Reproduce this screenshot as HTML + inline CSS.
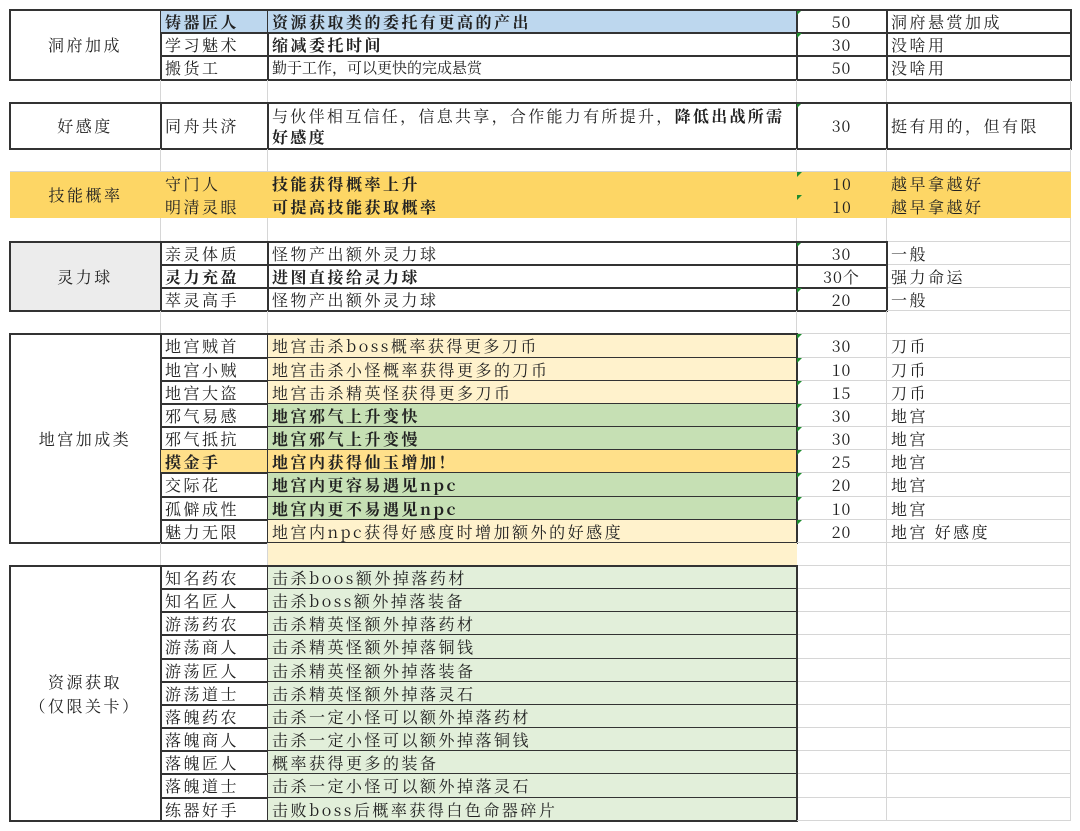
<!DOCTYPE html>
<html><head><meta charset="utf-8"><style>
body{margin:0;width:1080px;height:831px;background:#fff;position:relative;overflow:hidden;font-family:"Noto Serif CJK SC","Liberation Serif",serif;font-size:16px;color:#222;letter-spacing:2.5px}
.c{position:absolute;box-sizing:border-box;border-right:1px solid #d6d6d6;border-bottom:1px solid #d6d6d6;padding-left:4px;white-space:nowrap;overflow:hidden}
.A{left:10px;width:151px;text-align:center;padding-left:0}
.B{left:161px;width:107px}
.C{left:268px;width:529px}
.D{left:797px;width:90px;text-align:center;padding-left:0;letter-spacing:1px}
.E{left:887px;width:184px}
.k{outline:1px solid #333;outline-offset:-0.5px}
.b{font-weight:700}
.t::before{content:"";position:absolute;left:0;top:0;border-top:5px solid #1e8c2e;border-right:5px solid transparent}
.box{position:absolute;box-sizing:border-box;border:1.5px solid #333;pointer-events:none}
</style></head><body>
<!-- section 1 -->
<div class="c A k" style="top:10px;height:70px;line-height:70px">洞府加成</div>
<div class="c B k b" style="top:10px;height:23px;line-height:23px;background:#bdd7ee">铸器匠人</div>
<div class="c C k b" style="top:10px;height:23px;line-height:23px;background:#bdd7ee">资源获取类的委托有更高的产出</div>
<div class="c D k t" style="top:10px;height:23px;line-height:23px">50</div>
<div class="c E k" style="top:10px;height:23px;line-height:23px">洞府悬赏加成</div>
<div class="c B k" style="top:33px;height:23px;line-height:23px">学习魅术</div>
<div class="c C k b" style="top:33px;height:23px;line-height:23px">缩减委托时间</div>
<div class="c D k t" style="top:33px;height:23px;line-height:23px">30</div>
<div class="c E k" style="top:33px;height:23px;line-height:23px">没啥用</div>
<div class="c B k" style="top:56px;height:24px;line-height:24px">搬货工</div>
<div class="c C k" style="top:56px;height:24px;line-height:24px;letter-spacing:0;font-size:15px">勤于工作，可以更快的完成悬赏</div>
<div class="c D k" style="top:56px;height:24px;line-height:24px">50</div>
<div class="c E k" style="top:56px;height:24px;line-height:24px">没啥用</div>
<div class="box" style="left:10px;top:10px;width:1061px;height:70px"></div>
<!-- blank -->
<div class="c A" style="top:80px;height:23px"></div><div class="c B" style="top:80px;height:23px"></div><div class="c C" style="top:80px;height:23px"></div><div class="c D" style="top:80px;height:23px"></div><div class="c E" style="top:80px;height:23px"></div>
<!-- 好感度 -->
<div class="c A k" style="top:103px;height:46px;line-height:46px">好感度</div>
<div class="c B k" style="top:103px;height:46px;line-height:46px">同舟共济</div>
<div class="c C k" style="top:103px;height:46px;line-height:21px;padding-top:2px;white-space:normal;letter-spacing:2.3px">与伙伴相互信任，信息共享，合作能力有所提升，<b>降低出战所需好感度</b></div>
<div class="c D k t" style="top:103px;height:46px;line-height:46px">30</div>
<div class="c E k" style="top:103px;height:46px;line-height:46px">挺有用的，但有限</div>
<div class="box" style="left:10px;top:103px;width:1061px;height:46px"></div>
<div class="c A" style="top:149px;height:23px"></div><div class="c B" style="top:149px;height:23px"></div><div class="c C" style="top:149px;height:23px"></div><div class="c D" style="top:149px;height:23px"></div><div class="c E" style="top:149px;height:23px"></div>
<!-- 技能概率 -->
<div style="position:absolute;left:10px;top:172px;width:1061px;height:46px;background:#fdd665"></div>
<div class="c A" style="top:172px;height:46px;line-height:46px;border:0">技能概率</div>
<div class="c B" style="top:172px;height:23px;line-height:23px;border:0">守门人</div>
<div class="c C b" style="top:172px;height:23px;line-height:23px;border:0">技能获得概率上升</div>
<div class="c D t" style="top:172px;height:23px;line-height:23px;border:0">10</div>
<div class="c E" style="top:172px;height:23px;line-height:23px;border:0">越早拿越好</div>
<div class="c B" style="top:195px;height:23px;line-height:23px;border:0">明清灵眼</div>
<div class="c C b" style="top:195px;height:23px;line-height:23px;border:0">可提高技能获取概率</div>
<div class="c D t" style="top:195px;height:23px;line-height:23px;border:0">10</div>
<div class="c E" style="top:195px;height:23px;line-height:23px;border:0">越早拿越好</div>
<div class="c A" style="top:218px;height:24px"></div><div class="c B" style="top:218px;height:24px"></div><div class="c C" style="top:218px;height:24px"></div><div class="c D" style="top:218px;height:24px"></div><div class="c E" style="top:218px;height:24px"></div>
<!-- 灵力球 -->
<div class="c A k" style="top:242px;height:69px;line-height:69px;background:#ececec">灵力球</div>
<div class="c B k" style="top:242px;height:23px;line-height:23px">亲灵体质</div>
<div class="c C k" style="top:242px;height:23px;line-height:23px">怪物产出额外灵力球</div>
<div class="c D k t" style="top:242px;height:23px;line-height:23px">30</div>
<div class="c E" style="top:242px;height:23px;line-height:23px">一般</div>
<div class="c B k b" style="top:265px;height:23px;line-height:23px">灵力充盈</div>
<div class="c C k b" style="top:265px;height:23px;line-height:23px">进图直接给灵力球</div>
<div class="c D k" style="top:265px;height:23px;line-height:23px">30个</div>
<div class="c E" style="top:265px;height:23px;line-height:23px">强力命运</div>
<div class="c B k" style="top:288px;height:23px;line-height:23px">萃灵高手</div>
<div class="c C k" style="top:288px;height:23px;line-height:23px">怪物产出额外灵力球</div>
<div class="c D k t" style="top:288px;height:23px;line-height:23px">20</div>
<div class="c E" style="top:288px;height:23px;line-height:23px">一般</div>
<div class="box" style="left:10px;top:242px;width:877px;height:69px"></div>
<div class="c A" style="top:311px;height:23px"></div><div class="c B" style="top:311px;height:23px"></div><div class="c C" style="top:311px;height:23px"></div><div class="c D" style="top:311px;height:23px"></div><div class="c E" style="top:311px;height:23px"></div>
<!-- 地宫 -->
<div class="c A k" style="top:334px;height:209px;line-height:209px">地宫加成类</div>
<div class="c B k" style="top:334px;height:24px;line-height:24px">地宫贼首</div>
<div class="c C k" style="top:334px;height:24px;line-height:24px;background:#fff2cc">地宫击杀boss概率获得更多刀币</div>
<div class="c D t" style="top:334px;height:24px;line-height:24px">30</div><div class="c E" style="top:334px;height:24px;line-height:24px">刀币</div>
<div class="c B k" style="top:358px;height:23px;line-height:23px">地宫小贼</div>
<div class="c C k" style="top:358px;height:23px;line-height:23px;background:#fff2cc">地宫击杀小怪概率获得更多的刀币</div>
<div class="c D t" style="top:358px;height:23px;line-height:23px">10</div><div class="c E" style="top:358px;height:23px;line-height:23px">刀币</div>
<div class="c B k" style="top:381px;height:23px;line-height:23px">地宫大盗</div>
<div class="c C k" style="top:381px;height:23px;line-height:23px;background:#fff2cc">地宫击杀精英怪获得更多刀币</div>
<div class="c D t" style="top:381px;height:23px;line-height:23px">15</div><div class="c E" style="top:381px;height:23px;line-height:23px">刀币</div>
<div class="c B k" style="top:404px;height:23px;line-height:23px">邪气易感</div>
<div class="c C k b" style="top:404px;height:23px;line-height:23px;background:#c6e0b4">地宫邪气上升变快</div>
<div class="c D t" style="top:404px;height:23px;line-height:23px">30</div><div class="c E" style="top:404px;height:23px;line-height:23px">地宫</div>
<div class="c B k" style="top:427px;height:23px;line-height:23px">邪气抵抗</div>
<div class="c C k b" style="top:427px;height:23px;line-height:23px;background:#c6e0b4">地宫邪气上升变慢</div>
<div class="c D t" style="top:427px;height:23px;line-height:23px">30</div><div class="c E" style="top:427px;height:23px;line-height:23px">地宫</div>
<div class="c B k b" style="top:450px;height:23px;line-height:23px;background:#ffe08a">摸金手</div>
<div class="c C k b" style="top:450px;height:23px;line-height:23px;background:#ffe08a">地宫内获得仙玉增加！</div>
<div class="c D t" style="top:450px;height:23px;line-height:23px">25</div><div class="c E" style="top:450px;height:23px;line-height:23px">地宫</div>
<div class="c B k" style="top:473px;height:24px;line-height:24px">交际花</div>
<div class="c C k b" style="top:473px;height:24px;line-height:24px;background:#c6e0b4">地宫内更容易遇见npc</div>
<div class="c D t" style="top:473px;height:24px;line-height:24px">20</div><div class="c E" style="top:473px;height:24px;line-height:24px">地宫</div>
<div class="c B k" style="top:497px;height:23px;line-height:23px">孤僻成性</div>
<div class="c C k b" style="top:497px;height:23px;line-height:23px;background:#c6e0b4">地宫内更不易遇见npc</div>
<div class="c D t" style="top:497px;height:23px;line-height:23px">10</div><div class="c E" style="top:497px;height:23px;line-height:23px">地宫</div>
<div class="c B k" style="top:520px;height:23px;line-height:23px">魅力无限</div>
<div class="c C k" style="top:520px;height:23px;line-height:23px;background:#fff2cc">地宫内npc获得好感度时增加额外的好感度</div>
<div class="c D t" style="top:520px;height:23px;line-height:23px">20</div><div class="c E" style="top:520px;height:23px;line-height:23px">地宫&nbsp;好感度</div>
<div class="box" style="left:10px;top:334px;width:787px;height:209px"></div>
<div class="c A" style="top:543px;height:23px"></div><div class="c B" style="top:543px;height:23px"></div><div class="c C" style="top:543px;height:23px;background:#fff2cc;border:0"></div><div class="c D" style="top:543px;height:23px"></div><div class="c E" style="top:543px;height:23px"></div>
<!-- 资源获取 -->
<div class="c A k" style="top:566px;height:255px;padding-top:104px;line-height:24px">资源获取<br>（仅限关卡）</div>
<div class="c B k" style="top:566px;height:23px;line-height:23px">知名药农</div><div class="c C k" style="top:566px;height:23px;line-height:23px;background:#e2efda">击杀boos额外掉落药材</div><div class="c D" style="top:566px;height:23px"></div><div class="c E" style="top:566px;height:23px"></div>
<div class="c B k" style="top:589px;height:23px;line-height:23px">知名匠人</div><div class="c C k" style="top:589px;height:23px;line-height:23px;background:#e2efda">击杀boss额外掉落装备</div><div class="c D" style="top:589px;height:23px"></div><div class="c E" style="top:589px;height:23px"></div>
<div class="c B k" style="top:612px;height:23px;line-height:23px">游荡药农</div><div class="c C k" style="top:612px;height:23px;line-height:23px;background:#e2efda">击杀精英怪额外掉落药材</div><div class="c D" style="top:612px;height:23px"></div><div class="c E" style="top:612px;height:23px"></div>
<div class="c B k" style="top:635px;height:24px;line-height:24px">游荡商人</div><div class="c C k" style="top:635px;height:24px;line-height:24px;background:#e2efda">击杀精英怪额外掉落铜钱</div><div class="c D" style="top:635px;height:24px"></div><div class="c E" style="top:635px;height:24px"></div>
<div class="c B k" style="top:659px;height:23px;line-height:23px">游荡匠人</div><div class="c C k" style="top:659px;height:23px;line-height:23px;background:#e2efda">击杀精英怪额外掉落装备</div><div class="c D" style="top:659px;height:23px"></div><div class="c E" style="top:659px;height:23px"></div>
<div class="c B k" style="top:682px;height:23px;line-height:23px">游荡道士</div><div class="c C k" style="top:682px;height:23px;line-height:23px;background:#e2efda">击杀精英怪额外掉落灵石</div><div class="c D" style="top:682px;height:23px"></div><div class="c E" style="top:682px;height:23px"></div>
<div class="c B k" style="top:705px;height:23px;line-height:23px">落魄药农</div><div class="c C k" style="top:705px;height:23px;line-height:23px;background:#e2efda">击杀一定小怪可以额外掉落药材</div><div class="c D" style="top:705px;height:23px"></div><div class="c E" style="top:705px;height:23px"></div>
<div class="c B k" style="top:728px;height:23px;line-height:23px">落魄商人</div><div class="c C k" style="top:728px;height:23px;line-height:23px;background:#e2efda">击杀一定小怪可以额外掉落铜钱</div><div class="c D" style="top:728px;height:23px"></div><div class="c E" style="top:728px;height:23px"></div>
<div class="c B k" style="top:751px;height:23px;line-height:23px">落魄匠人</div><div class="c C k" style="top:751px;height:23px;line-height:23px;background:#e2efda">概率获得更多的装备</div><div class="c D" style="top:751px;height:23px"></div><div class="c E" style="top:751px;height:23px"></div>
<div class="c B k" style="top:774px;height:24px;line-height:24px">落魄道士</div><div class="c C k" style="top:774px;height:24px;line-height:24px;background:#e2efda">击杀一定小怪可以额外掉落灵石</div><div class="c D" style="top:774px;height:24px"></div><div class="c E" style="top:774px;height:24px"></div>
<div class="c B k" style="top:798px;height:23px;line-height:23px">练器好手</div><div class="c C k" style="top:798px;height:23px;line-height:23px;background:#e2efda">击败boss后概率获得白色命器碎片</div><div class="c D" style="top:798px;height:23px"></div><div class="c E" style="top:798px;height:23px"></div>
<div class="box" style="left:10px;top:566px;width:787px;height:255px"></div>
</body></html>
